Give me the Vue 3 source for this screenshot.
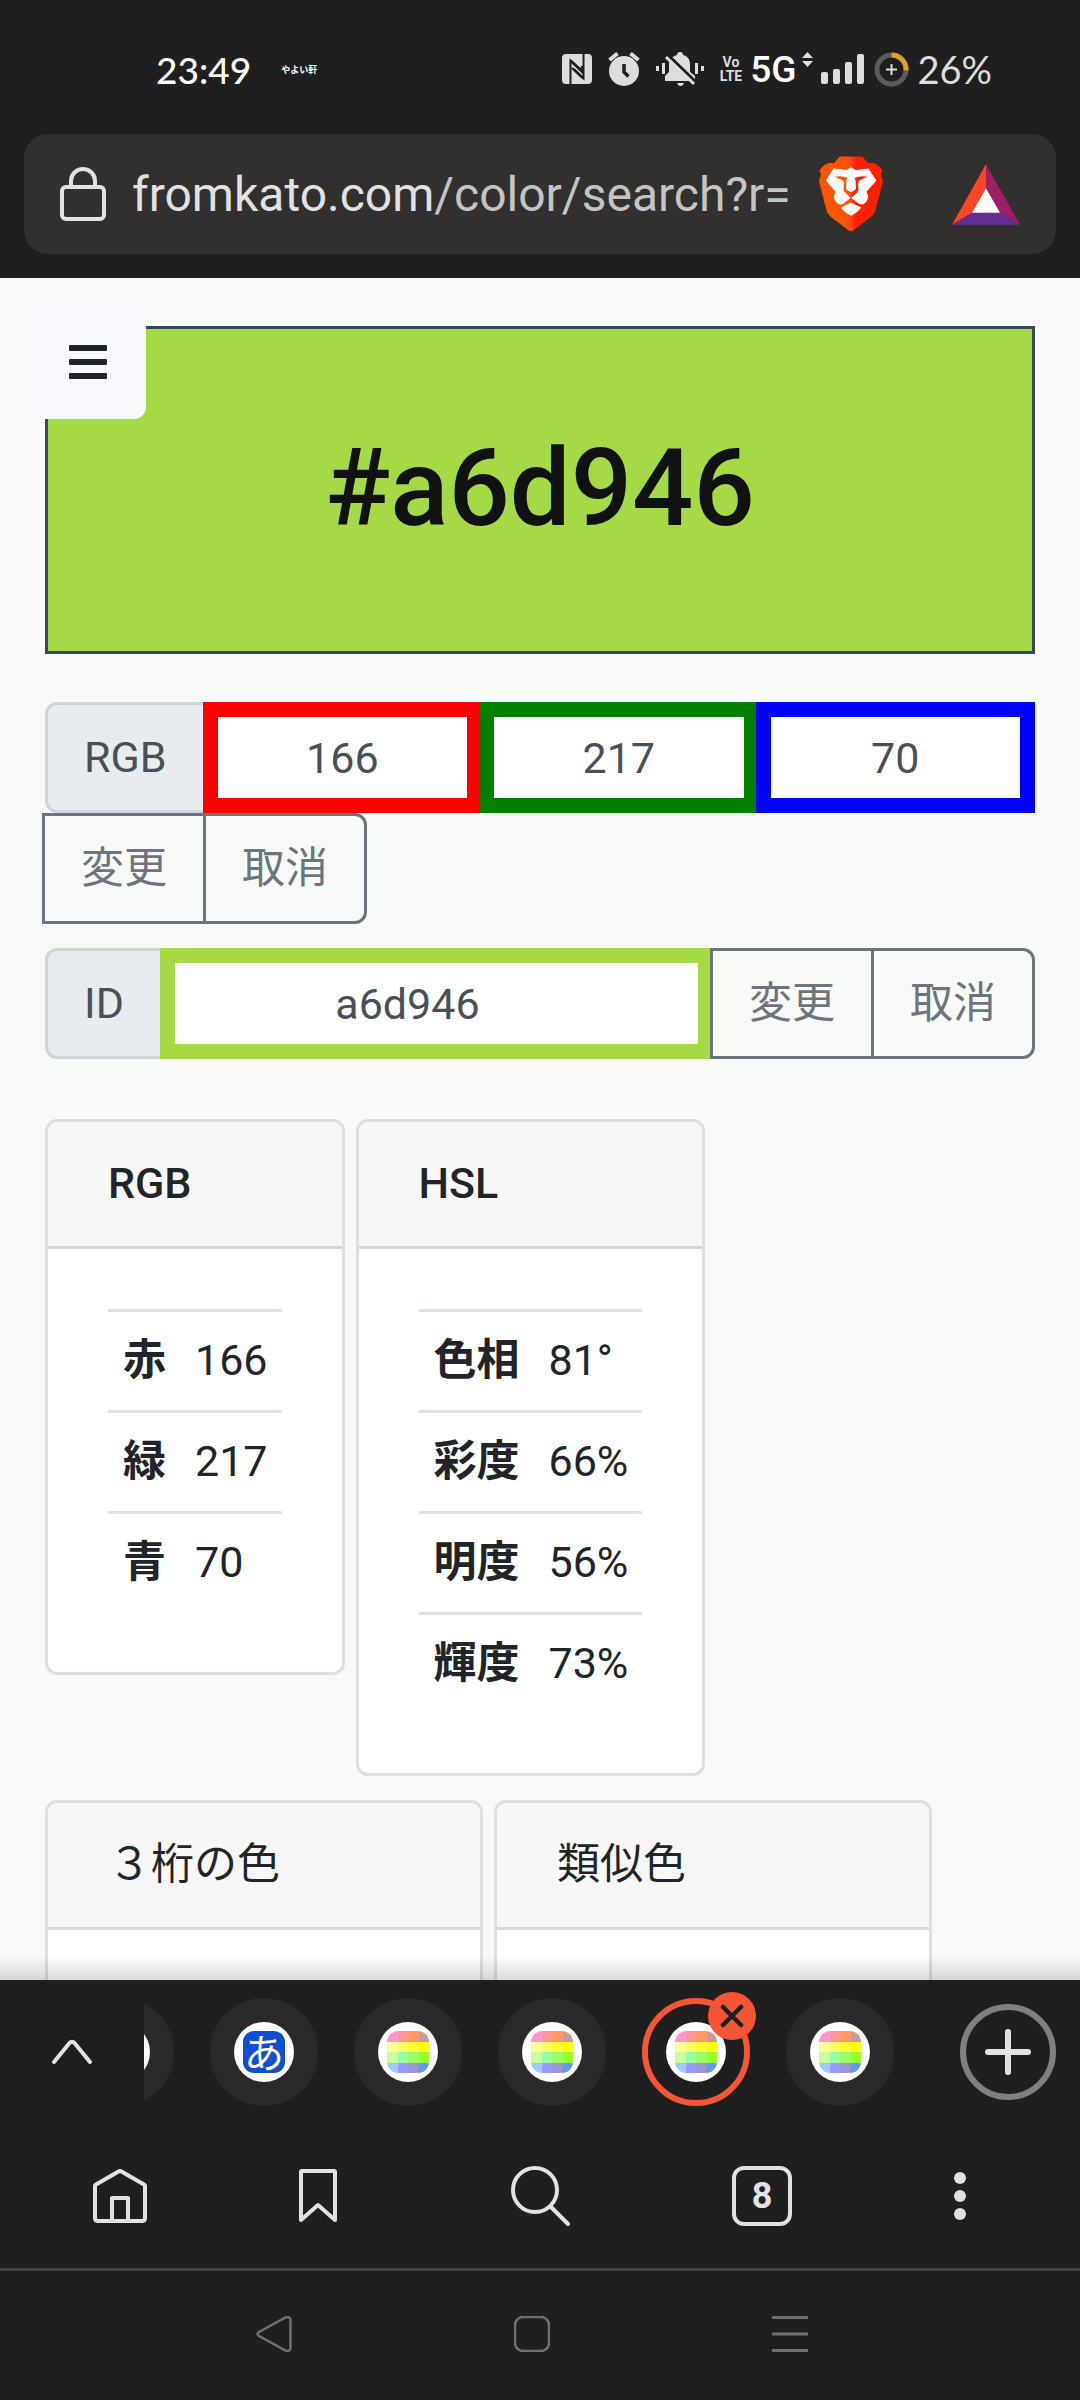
<script setup>
import { ref } from 'vue'

const color = ref({ r: 166, g: 217, b: 70, id: 'a6d946' })

const rgbInputs = [
  { key: 'r', name: '赤', cls: 'red' },
  { key: 'g', name: '緑', cls: 'green' },
  { key: 'b', name: '青', cls: 'blue' },
]

const tables = [
  { title: 'RGB', rows: [['赤', '166'], ['緑', '217'], ['青', '70']] },
  { title: 'HSL', rows: [['色相', '81°'], ['彩度', '66%'], ['明度', '56%'], ['輝度', '73%']] },
]

// favicon: 4x4 pastel palette
const palette = [
  '#ff99cc', '#ff9999', '#ff9966', '#cc9999',
  '#ffff99', '#ffff66', '#ffff33', '#ffff00',
  '#ccff99', '#99ff99', '#99ff66', '#99ff33',
  '#99ccff', '#9999ff', '#9999cc', '#6699ff',
]

const tabs = [
  { id: 1, icon: 'blank' },
  { id: 2, icon: 'kana' },
  { id: 3, icon: 'palette' },
  { id: 4, icon: 'palette' },
  { id: 5, icon: 'palette', active: true },
  { id: 6, icon: 'palette' },
]
</script>

<template>
  <div class="screen">
    <header class="top">
      <div class="status">
        <span class="time">23:49</span>
        <span class="notice">やよい軒</span>
        <div class="status-icons">
          <svg width="30" height="30" viewBox="0 0 30 30">
            <rect width="30" height="30" rx="4" fill="#ddd" />
            <path d="M8.500 30V6.500L20 17M21.500 0V24.500L10 14" fill="none" stroke="#1f1f1f" stroke-width="2" />
            <path d="M9 7L20 17.500V12M21 24L12 15.500" fill="none" stroke="#1f1f1f" stroke-width="2.500" />
          </svg>
          <svg width="32" height="34" viewBox="0 0 32 34">
            <circle cx="16" cy="19" r="15" fill="#ddd" />
            <path d="M1.500 8L9.500 1.500M30.500 8L22.500 1.500" stroke="#ddd" stroke-width="4" />
            <path d="M16 12V20L20.500 24.500" fill="none" stroke="#1f1f1f" stroke-width="3.500" />
          </svg>
          <svg width="48" height="34" viewBox="0 0 48 34">
            <path d="M24 0C26 0 27 1 27 3C32 4 34 8 34 12V20L39 24V29H9V24L13 20V12C13 7 17 4 21 3C21 1 22 0 24 0Z" fill="#ddd" />
            <path d="M21 31H28Q27 34 24.500 34Q22 34 21 31ZM0 14H3V19H0ZM6 11H9V22H6ZM39 11H42V22H39ZM45 14H48V19H45Z" fill="#ddd" />
            <path d="M12 3L40 30" stroke="#1f1f1f" stroke-width="3" />
            <path d="M10 5L38 32" stroke="#ddd" stroke-width="3" />
          </svg>
          <span class="volte"><span>Vo</span><span>LTE</span></span>
          <span class="network">5G</span>
          <svg class="updown" width="11" height="16" viewBox="0 0 11 16">
            <path d="M0 6L5.500 0L11 6ZM0 9L5.500 15L11 9Z" fill="#ddd" />
          </svg>
          <svg width="43" height="30" viewBox="0 0 43 30">
            <g fill="#ddd">
              <rect y="18" width="7" height="12" rx="2" />
              <rect x="12" y="15" width="7" height="15" rx="2" />
              <rect x="24" y="8" width="7" height="22" rx="2" />
              <rect x="36" width="7" height="30" rx="2" />
            </g>
          </svg>
          <svg class="ring" width="35" height="35" viewBox="0 0 35 35" fill="none">
            <circle cx="17.500" cy="17.500" r="14.500" stroke="#5a5a5a" stroke-width="5" />
            <path d="M17.500 3A14.500 14.500 0 0 1 32 18.500" stroke="#dda02b" stroke-width="5" />
            <path d="M17.500 12V23M12 17.500H23" stroke="#ddd" stroke-width="2" />
          </svg>
          <span class="battery">26%</span>
        </div>
      </div>

      <div class="address">
        <svg width="46" height="54" viewBox="0 0 46 54" fill="none" stroke="#e2e2e2" stroke-width="4">
          <rect x="2" y="20" width="42" height="32" rx="4" />
          <path d="M11 20V14A12 12 0 0 1 35 14V20" />
        </svg>
        <button class="url" type="button"><b>fromkato.com</b>/color/search?r=</button>
        <button class="shield" type="button" aria-label="Brave Shields">
          <svg width="66" height="78" viewBox="52 30 200 234">
            <defs>
              <linearGradient id="lion">
                <stop offset="0.420" stop-color="#ff5500" />
                <stop offset="0.500" stop-color="#ff4020" />
                <stop offset="0.580" stop-color="#ff2000" />
              </linearGradient>
            </defs>
            <path d="M118 33H186L204 54Q226 46 247 75L243 89L249 108L225 200Q222 209 214 215L160 257Q152 263 144 257L90 215Q82 209 79 200L55 108L61 89L57 75Q78 46 100 54Z" fill="url(#lion)" />
            <path d="M152 66L166 74L205 70L229 106L199 140Q208 156 199 170Q186 187 170 172L152 158L134 172Q118 187 105 170Q96 156 105 140L76 106L99 70L138 74Z" fill="#fff" />
            <path d="M102 95Q122 90 141 98Q139 102 138 107L137 130Q138 135 152 141Q166 135 167 130L166 107Q165 102 163 98Q182 90 202 95Q180 103 175 108Q172 112 175 132Q175 140 168 145L152 160L136 145Q129 140 129 132Q132 112 129 108Q124 103 102 95Z" fill="url(#lion)" />
            <path d="M152 173L183 188Q172 203 152 213Q132 203 121 188Z" fill="#fff" />
          </svg>
        </button>
        <button type="button" aria-label="Brave Rewards">
          <svg width="68" height="61" viewBox="456 54 204 182">
            <path d="M558 54V126L516 200L456 236Z" fill="#ff4724" />
            <path d="M558 54V126L600 200L660 236Z" fill="#9e1f63" />
            <path d="M456 236L516 200H600L660 236Z" fill="#662d91" />
            <path d="M558 126L600 200H516Z" fill="#fff" />
          </svg>
        </button>
      </div>
    </header>

    <main class="page">
      <button class="menu" type="button" aria-label="メニュー">
        <svg width="38" height="34" viewBox="0 0 38 34" fill="#212529">
          <rect width="38" height="6" rx="1" />
          <rect y="14" width="38" height="6" rx="1" />
          <rect y="28" width="38" height="6" rx="1" />
        </svg>
      </button>

      <h1 class="swatch">#{{ color.id }}</h1>

      <form class="group" @submit.prevent>
        <label class="addon" for="rgb-r">RGB</label>
        <input
          v-for="c in rgbInputs"
          :id="'rgb-' + c.key"
          :key="c.key"
          v-model="color[c.key]"
          :class="c.cls"
          :aria-label="c.name"
          type="text"
        />
        <button type="submit">変更</button>
        <button type="reset">取消</button>
      </form>

      <form class="group" @submit.prevent>
        <label class="addon" for="color-id">ID</label>
        <input id="color-id" v-model="color.id" class="lime" type="text" />
        <button type="submit">変更</button>
        <button type="reset">取消</button>
      </form>

      <div class="cards first">
        <section v-for="t in tables" :key="t.title" class="card">
          <h2>{{ t.title }}</h2>
          <div class="body">
            <table>
              <tbody>
                <tr v-for="[name, value] in t.rows" :key="name">
                  <th scope="row">{{ name }}</th>
                  <td>{{ value }}</td>
                </tr>
              </tbody>
            </table>
          </div>
        </section>
      </div>

      <div class="cards">
        <section v-for="title in ['３桁の色', '類似色']" :key="title" class="card wide">
          <h2>{{ title }}</h2>
          <div class="body" />
        </section>
      </div>
    </main>

    <footer class="bottom">
      <div class="strip">
        <button class="side" type="button" aria-label="タブ一覧">
          <svg width="42" height="26" viewBox="0 0 42 26" fill="none" stroke="#e2e2e2" stroke-width="4" stroke-linecap="round">
            <path d="M3 23L18.500 4Q21 1.500 23.500 4L39 23" />
          </svg>
        </button>
        <div class="scroller">
          <div v-for="tab in tabs" :key="tab.id" class="tab" :class="{ active: tab.active }">
            <span class="favicon">
              <span v-if="tab.icon === 'kana'" class="kana">あ</span>
              <span v-else-if="tab.icon === 'palette'" class="palette">
                <i v-for="(c, i) in palette" :key="i" :style="{ background: c }" />
              </span>
            </span>
            <button v-if="tab.active" class="close" type="button" aria-label="閉じる">
              <svg width="24" height="24" viewBox="0 0 24 24" stroke="#1f1f1f" stroke-width="4.500" stroke-linecap="round">
                <path d="M3 3L21 21M21 3L3 21" />
              </svg>
            </button>
          </div>
        </div>
        <button class="side" type="button" aria-label="新しいタブ">
          <svg width="96" height="96" viewBox="0 0 96 96" fill="none">
            <circle cx="48" cy="48" r="45" stroke="#808080" stroke-width="6" />
            <path d="M48 28V68M28 48H68" stroke="#e2e2e2" stroke-width="6" stroke-linecap="round" />
          </svg>
        </button>
      </div>

      <nav class="toolbar">
        <button type="button" aria-label="ホーム">
          <svg width="56" height="56" viewBox="0 0 56 56" fill="none" stroke="#e2e2e2" stroke-width="4" stroke-linejoin="round">
            <path d="M3 18Q3 17 4 16.500L26.500 3.500Q28 2.500 29.500 3.500L52 16.500Q53 17 53 18V50Q53 53 50 53H6Q3 53 3 50Z" />
            <path d="M20 53V30H36V53" />
          </svg>
        </button>
        <button type="button" aria-label="ブックマーク">
          <svg width="40" height="56" viewBox="0 0 40 56" fill="none" stroke="#e2e2e2" stroke-width="4" stroke-linejoin="round">
            <path d="M3 4Q3 3 4 3H36Q37 3 37 4V52L20 37L3 52Z" />
          </svg>
        </button>
        <button type="button" aria-label="検索">
          <svg width="60" height="60" viewBox="0 0 60 60" fill="none" stroke="#e2e2e2" stroke-width="4" stroke-linecap="round">
            <circle cx="25" cy="24" r="22" />
            <path d="M41 41L58 58" />
          </svg>
        </button>
        <button type="button" aria-label="タブ">
          <span class="count">8</span>
        </button>
        <button type="button" aria-label="その他">
          <svg width="12" height="48" viewBox="0 0 12 48" fill="#e2e2e2">
            <circle cx="6" cy="6" r="6" />
            <circle cx="6" cy="24" r="6" />
            <circle cx="6" cy="42" r="6" />
          </svg>
        </button>
      </nav>

      <nav class="system">
        <button type="button" aria-label="戻る">
          <svg width="36" height="36" viewBox="0 0 36 36" fill="none" stroke="#707070" stroke-width="2.500">
            <path d="M3 16L29.500 1.500Q34.500 0 34.500 4.500V31.500Q34.500 36 29.500 34.500L3 20Q0 18 3 16Z" />
          </svg>
        </button>
        <button type="button" aria-label="ホーム画面">
          <svg width="36" height="36" viewBox="0 0 36 36" fill="none" stroke="#707070" stroke-width="2.500">
            <rect x="1" y="1" width="34" height="34" rx="8" />
          </svg>
        </button>
        <button type="button" aria-label="履歴">
          <svg width="36" height="36" viewBox="0 0 36 36" stroke="#707070" stroke-width="3">
            <path d="M0 1.500H36M0 18H36M0 34.500H36" />
          </svg>
        </button>
      </nav>
    </footer>
  </div>
</template>

<style>
body {
  background: #1f1f1f;
}
</style>

<style scoped>
.screen {
  display: flex;
  flex-direction: column;
  height: 100vh;
  overflow: hidden;
  font-family: Roboto, 'Noto Sans CJK JP', sans-serif;
  font-size: 43px;
  color: #212529;
}

.screen * {
  box-sizing: border-box;
}

button {
  display: flex;
  align-items: center;
  justify-content: center;
  margin: 0;
  padding: 0;
  border: 0;
  background: none;
  font: inherit;
  color: inherit;
}

svg {
  display: block;
  flex: none;
}

/* ---- status bar + address bar ---- */
.top {
  flex: none;
  padding-bottom: 24px;
  background: #1f1f1f;
  color: #fff;
}

.status {
  display: flex;
  align-items: center;
  height: 134px;
  padding: 4px 88px 0 156px;
  font-family: Lato, Roboto, sans-serif;
}

.time {
  font-size: 37px;
  font-weight: 500;
}

.notice {
  margin-left: 30px;
  font-family: 'Noto Sans CJK JP', sans-serif;
  font-size: 9px;
  font-weight: 700;
}

.status-icons {
  display: flex;
  align-items: center;
  gap: 16px;
  margin-left: auto;
}

.volte {
  display: flex;
  flex-direction: column;
  align-items: center;
  font-family: Roboto, sans-serif;
  font-size: 14px;
  font-weight: 700;
  line-height: 14px;
  color: #ddd;
}

.network {
  margin: 0 -10px 0 -8px;
  font-family: Roboto, sans-serif;
  font-size: 37px;
  font-weight: 500;
}

.updown {
  align-self: flex-start;
  margin: 6px -8px 0 0;
}

.ring {
  margin-left: -6px;
}

.battery {
  margin-left: -8px;
  font-size: 38px;
  color: #ddd;
}

.address {
  display: flex;
  align-items: center;
  gap: 26px;
  height: 120px;
  margin: 0 24px;
  padding: 0 36px;
  border-radius: 24px;
  background: #32302e;
}

.url {
  flex: 1;
  min-width: 0;
  justify-content: flex-start;
  overflow: hidden;
  font-size: 48px;
  white-space: nowrap;
  color: #c3c5c5;
}

.url b {
  font-weight: 400;
  color: #e2e2e2;
}

.shield {
  margin-right: 42px;
}

/* ---- web page ---- */
.page {
  position: relative;
  flex: 1;
  min-height: 0;
  overflow: hidden;
  padding: 48px 45px 0;
  background: #f8faf7;
}

/* shade over the page where the bottom bar begins */
.page::after {
  content: '';
  position: absolute;
  inset: auto 0 0;
  height: 24px;
  background: linear-gradient(rgba(0, 0, 0, 0), rgba(0, 0, 0, 0.14));
}

.menu {
  position: absolute;
  top: 26px;
  left: 30px;
  width: 116px;
  height: 115px;
  border-radius: 0 0 12px 0;
  background: #f8f9fc;
}

.swatch {
  margin: 0 0 48px;
  padding: 94px 0 98px;
  border: 3px solid #34495e;
  background: #a6d946;
  font-size: 108px;
  font-weight: 500;
  line-height: 130px;
  text-align: center;
  color: #111;
}

.group {
  display: flex;
  flex-wrap: wrap;
  margin-bottom: 24px;
}

.addon,
.group input,
.group button {
  height: 111px;
  line-height: 63px;
}

.addon {
  display: flex;
  align-items: center;
  padding: 0 36px;
  border: 3px solid #ced4da;
  border-radius: 12px 0 0 12px;
  background: #e9ecef;
  color: #495057;
}

.group input {
  flex: 1 1 240px;
  min-width: 0;
  margin: 0 0 0 -3px;
  padding: 0 36px;
  border: 15px solid;
  border-radius: 0;
  outline: 0;
  background: #fff;
  font: inherit;
  text-align: center;
  color: #495057;
}

.group .red {
  border-color: #f00;
}

.group .green {
  border-color: #008000;
}

.group .blue {
  border-color: #00f;
}

.group .lime {
  padding-right: 94px;
  border-color: #a6d946;
}

.group button {
  margin-left: -3px;
  padding: 0 36px;
  border: 3px solid #6c757d;
  color: #6c757d;
}

.group button:last-child {
  border-radius: 0 12px 12px 0;
}

.cards {
  display: flex;
  align-items: flex-start;
  gap: 11px;
  margin-bottom: 24px;
}

.first {
  margin-top: 60px;
}

.card {
  border: 3px solid #dedfde;
  border-radius: 12px;
  background: #fff;
}

.card h2 {
  margin: 0;
  padding: 36px 60px 38px;
  border-bottom: 3px solid #d8d8d8;
  border-radius: 9px 9px 0 0;
  background: #f7f7f7;
  font-size: 43px;
  font-weight: 500;
  line-height: 50px;
}

.wide {
  flex: 0 1 438px;
}

.wide h2 {
  font-weight: 400;
}

.wide .body {
  min-height: 240px;
}

.body {
  padding: 60px;
}

table {
  border-collapse: separate;
  border-spacing: 0;
}

th,
td {
  padding: 14px 14px 16px 15px;
  border-top: 3px solid #dee2e6;
  line-height: 68px;
  text-align: left;
  vertical-align: top;
}

/* ---- browser bottom bar ---- */
.bottom {
  flex: none;
  background: #1f1f1f;
}

.strip {
  display: flex;
  height: 144px;
}

.side {
  flex: none;
  width: 144px;
}

.scroller {
  display: flex;
  flex: 1;
  align-items: center;
  gap: 36px;
  min-width: 0;
  overflow: hidden;
}

.tab {
  position: relative;
  display: flex;
  flex: none;
  align-items: center;
  justify-content: center;
  width: 108px;
  height: 108px;
  border-radius: 50%;
  background: #2a2a2a;
}

/* strip is scrolled, the first tab is mostly out of view */
.tab:first-child {
  margin-left: -78px;
}

.tab.active {
  border: 6px solid #f45534;
  background: none;
}

.favicon {
  display: flex;
  align-items: center;
  justify-content: center;
  width: 60px;
  height: 60px;
  border-radius: 50%;
  background: #fff;
}

.kana,
.palette {
  width: 42px;
  height: 42px;
  border-radius: 11px;
}

.kana {
  background: #124ed2;
  font-family: 'Noto Sans CJK JP', sans-serif;
  font-size: 40px;
  line-height: 40px;
  text-align: center;
  color: #fff;
}

.palette {
  display: grid;
  grid-template-columns: repeat(4, 1fr);
  grid-template-rows: repeat(4, 1fr);
  overflow: hidden;
}

.close {
  position: absolute;
  top: -12px;
  right: -12px;
  width: 48px;
  height: 48px;
  border-radius: 50%;
  background: #f45534;
}

.toolbar {
  display: grid;
  grid-template-columns: 14fr 19fr 18fr 19fr 14fr;
  height: 144px;
  padding: 0 36px;
}

.count {
  width: 60px;
  height: 60px;
  border: 4px solid #e2e2e2;
  border-radius: 12px;
  font-size: 36px;
  font-weight: 700;
  line-height: 52px;
  text-align: center;
  color: #e2e2e2;
}

.system {
  display: flex;
  align-items: center;
  justify-content: center;
  gap: 222px;
  height: 132px;
  padding: 0 16px 3px 0;
  border-top: 3px solid #454545;
}
</style>
